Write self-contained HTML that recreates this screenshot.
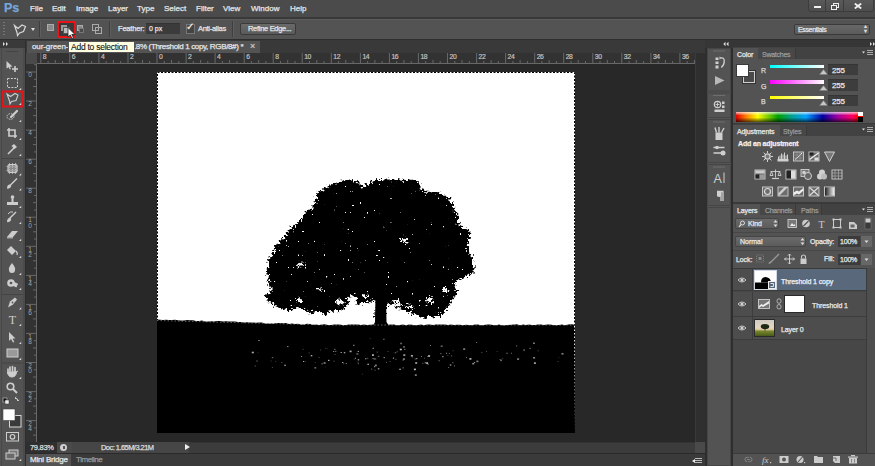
<!DOCTYPE html>
<html><head><meta charset="utf-8">
<style>
*{margin:0;padding:0;box-sizing:border-box}
html,body{width:875px;height:466px;overflow:hidden;background:#282828;font-family:"Liberation Sans",sans-serif;}
.a{position:absolute}
.t{position:absolute;white-space:nowrap;color:#e6e6e6;font-size:10px;line-height:12px;-webkit-text-stroke:0.25px currentColor}
</style></head><body>
<!-- menu bar -->
<div class="a" style="left:0;top:0;width:875px;height:17px;background:#4b4b4b"></div>
<div class="t" style="left:4px;top:2px;font-size:12.5px;line-height:12px;font-weight:bold;color:#74a6dc">Ps</div>
<div class="t" style="left:30px;top:5px;font-size:8px;line-height:8px">File</div>
<div class="t" style="left:52px;top:5px;font-size:8px;line-height:8px">Edit</div>
<div class="t" style="left:76px;top:5px;font-size:8px;line-height:8px">Image</div>
<div class="t" style="left:108px;top:5px;font-size:8px;line-height:8px">Layer</div>
<div class="t" style="left:137px;top:5px;font-size:8px;line-height:8px">Type</div>
<div class="t" style="left:164px;top:5px;font-size:8px;line-height:8px">Select</div>
<div class="t" style="left:196px;top:5px;font-size:8px;line-height:8px">Filter</div>
<div class="t" style="left:223px;top:5px;font-size:8px;line-height:8px">View</div>
<div class="t" style="left:251px;top:5px;font-size:8px;line-height:8px">Window</div>
<div class="t" style="left:290px;top:5px;font-size:8px;line-height:8px">Help</div>
<!-- window controls -->
<div class="a" style="left:808px;top:-2px;width:66px;height:14px;background:linear-gradient(#5a5a5a,#4e4e4e);border:1px solid #3c3c3c;border-radius:0 0 3px 3px"></div>
<div class="a" style="left:825px;top:0;width:1px;height:11px;background:#3c3c3c"></div>
<div class="a" style="left:843px;top:0;width:1px;height:11px;background:#3c3c3c"></div>
<div class="a" style="left:813.5px;top:6px;width:7px;height:2.2px;background:#f0f0f0"></div>
<div class="a" style="left:833px;top:3px;width:6px;height:5px;border:1.5px solid #f0f0f0"></div>
<div class="a" style="left:830.5px;top:5px;width:6px;height:4.5px;border:1.5px solid #f0f0f0;background:#555"></div>
<svg class="a" style="left:854px;top:3px" width="8" height="6"><path d="M0.8,0.5 L7.2,5.5 M7.2,0.5 L0.8,5.5" stroke="#f0f0f0" stroke-width="1.8"/></svg>

<!-- separator -->
<div class="a" style="left:0;top:17px;width:875px;height:2px;background:#393939"></div>
<!-- options bar -->
<div class="a" style="left:0;top:19px;width:875px;height:20px;background:#535353;border-top:1px solid #5c5c5c"></div>
<div class="a" style="left:0;top:39px;width:875px;height:1px;background:#2e2e2e"></div>
<div class="a" style="left:3px;top:22px;width:2px;height:15px;background:repeating-linear-gradient(#777 0 1px,transparent 1px 3px)"></div>
<svg class="a" style="left:13px;top:23px" width="14" height="14" viewBox="0 0 14 14"><path d="M1.5,2.5 L5,5.5 L9,2 L12.5,3.5 L10.5,8.5 L6.5,10 L4.5,12.5 L4,9.5 Z" fill="none" stroke="#d8d8d8" stroke-width="1.2"/></svg>
<div class="a" style="left:31px;top:28px;width:0;height:0;border-left:2.5px solid transparent;border-right:2.5px solid transparent;border-top:3px solid #ddd"></div>
<div class="a" style="left:39px;top:21px;width:1px;height:16px;background:#3e3e3e"></div>
<div class="a" style="left:40px;top:21px;width:1px;height:16px;background:#5e5e5e"></div>
<div class="a" style="left:47px;top:24px;width:7px;height:7px;border:1px solid #aaa;background:#8a8a8a"></div>
<div class="a" style="left:57px;top:21px;width:19px;height:17px;border:2px solid #e8141a;background:#3a3a3a"></div>
<div class="a" style="left:61px;top:25px;width:6px;height:6px;background:#9a9a9a"></div>
<div class="a" style="left:63px;top:27px;width:7px;height:7px;background:#bcbcbc;border:1px solid #555"></div>
<svg class="a" style="left:67px;top:27px" width="9" height="12" viewBox="0 0 9 12"><path d="M1,0.5 L1,10 L3.3,8 L5,11.5 L6.5,10.8 L4.8,7.5 L8,7.5 Z" fill="#fff" stroke="#222" stroke-width="0.8"/></svg>
<div class="a" style="left:77px;top:25px;width:6px;height:6px;border:1px solid #aaa;background:#8a8a8a"></div>
<div class="a" style="left:79px;top:27.5px;width:5px;height:5.5px;border:1px solid #777;background:#4a4a4a"></div>
<div class="a" style="left:92px;top:24px;width:7px;height:7px;border:1px solid #aaa"></div>
<div class="a" style="left:95px;top:27px;width:7px;height:7px;border:1px solid #aaa"></div>
<div class="a" style="left:109px;top:21px;width:1px;height:16px;background:#3e3e3e"></div>
<div class="a" style="left:110px;top:21px;width:1px;height:16px;background:#5e5e5e"></div>
<div class="t" style="left:118px;top:24px;font-size:7.5px;line-height:9px;letter-spacing:-0.2px">Feather:</div>
<div class="a" style="left:146px;top:23px;width:34px;height:11px;background:#3b3b3b;border-top:1px solid #333"></div>
<div class="t" style="left:149px;top:24px;font-size:7px;line-height:9px">0 px</div>
<div class="a" style="left:186px;top:24px;width:9px;height:10px;background:#444;border:1px solid #777"></div>
<div class="t" style="left:186px;top:21px;font-size:10px;line-height:12px;color:#eee">&#x2713;</div>
<div class="t" style="left:198px;top:24px;font-size:7.5px;line-height:9px;letter-spacing:-0.3px">Anti-alias</div>
<div class="a" style="left:232px;top:21px;width:1px;height:16px;background:#3e3e3e"></div>
<div class="a" style="left:233px;top:21px;width:1px;height:16px;background:#5e5e5e"></div>
<div class="a" style="left:240px;top:23px;width:56px;height:12px;background:linear-gradient(#6a6a6a,#5a5a5a);border:1px solid #3a3a3a;border-radius:2px"></div>
<div class="t" style="left:248px;top:24px;font-size:7.5px;line-height:9px;letter-spacing:-0.3px">Refine Edge...</div>
<div class="a" style="left:794px;top:24px;width:76px;height:11px;background:linear-gradient(#676767,#5b5b5b);border:1px solid #3a3a3a;border-radius:2px"></div>
<div class="t" style="left:798px;top:25px;font-size:7px;line-height:9px;letter-spacing:-0.35px">Essentials</div>
<div class="t" style="left:864px;top:24px;font-size:6px;line-height:5px;color:#ddd">&#x25B4;<br>&#x25BE;</div>

<!-- toolbar -->
<div class="a" style="left:0;top:40px;width:25px;height:426px;background:#535353"></div>
<div class="a" style="left:0;top:40px;width:25px;height:8px;background:#383838"></div>
<div class="a" style="left:25px;top:40px;width:1px;height:426px;background:#2e2e2e"></div>
<svg class="a" style="left:0;top:0" width="26" height="466"><rect x="1" y="48" width="1" height="418" fill="#484848"/><rect x="23.5" y="48" width="1" height="418" fill="#444"/><rect x="0" y="40" width="25" height="8" fill="#3a3a3a"/><path d="M3,42 l2,2 l-2,2z M6,42 l2,2 l-2,2z" fill="#ddd"/><rect x="6" y="51" width="12" height="1" fill="#444"/><path d="M6.5,61 L12.5,66.5 L10,66.8 L11,69 L9.8,69.4 L8.8,67.2 L6.5,68.5Z" fill="#cdcdcd"/><path d="M12,69h6M15,66v6" stroke="#cdcdcd" stroke-width="1.6"/><rect x="7.5" y="78.5" width="10" height="9" fill="none" stroke="#cdcdcd" stroke-width="1" stroke-dasharray="2 1.3"/><path d="M19,90 h2.2 v-2.2z" fill="#ddd"/><rect x="3" y="91.5" width="20" height="15" fill="none" stroke="#e4141b" stroke-width="2"/><path d="M7,94 L10.5,96.5 L15,93.5 L18,95 L16,100.5 L11.5,101.5 L10,104 L9.5,101Z" fill="none" stroke="#cdcdcd" stroke-width="1.1"/><path d="M19,105 h2.2 v-2.2z" fill="#ddd"/><ellipse cx="10.5" cy="116.5" rx="3.5" ry="2.8" fill="none" stroke="#cdcdcd" stroke-width="1" stroke-dasharray="1.5 1"/><path d="M11,117 L17,111" stroke="#cdcdcd" stroke-width="2.2" stroke-linecap="round"/><path d="M19,122 h2.2 v-2.2z" fill="#ddd"/><path d="M9,128 V136 H17 M7,130 H15 V138" fill="none" stroke="#cdcdcd" stroke-width="1.6"/><path d="M19,140 h2.2 v-2.2z" fill="#ddd"/><path d="M8,154 L15,147" stroke="#cdcdcd" stroke-width="1.6"/><path d="M14,144 l3,3 l-2.5,2 l-3,-3z" fill="#cdcdcd"/><path d="M19,156 h2.2 v-2.2z" fill="#ddd"/><rect x="2" y="158" width="21" height="1" fill="#444"/><rect x="8" y="164.5" width="9" height="8" rx="1.5" fill="#8a8a8a" stroke="#cdcdcd" stroke-width="1.2"/><path d="M9.5,163.0v11M12.5,163.0v11M15.5,163.0v11M6.5,166.5h12M6.5,170.5h12" stroke="#cdcdcd" stroke-width="0.7" stroke-dasharray="1 1"/><path d="M19,175.5 h2.2 v-2.2z" fill="#ddd"/><path d="M10,185.5 L17,178.5" stroke="#cdcdcd" stroke-width="1.5"/><path d="M7,188.5 q0,-4 3,-4 q2,1 0.5,3 q-1.5,1.5 -3.5,1z" fill="#cdcdcd"/><path d="M19,190.5 h2.2 v-2.2z" fill="#ddd"/><circle cx="12.5" cy="197" r="1.8" fill="#cdcdcd"/><rect x="11.5" y="198" width="2" height="4" fill="#cdcdcd"/><path d="M7,202 h11 v3 h-11z" fill="#cdcdcd"/><path d="M19,208 h2.2 v-2.2z" fill="#ddd"/><path d="M9,219 L16,212" stroke="#cdcdcd" stroke-width="1.5"/><path d="M7,222 q0,-4 3,-4 q2,1 0.5,3 q-1.5,1.5 -3.5,1z" fill="#cdcdcd"/><path d="M8,214 q2,-3 5,-2" stroke="#cdcdcd" fill="none" stroke-width="1"/><path d="M19,224 h2.2 v-2.2z" fill="#ddd"/><path d="M7,237 L12,231 L18,231 L13,237Z" fill="#cdcdcd"/><path d="M7,237 h6 v1.5 h-6z" fill="#aaa"/><path d="M19,241 h2.2 v-2.2z" fill="#ddd"/><path d="M7,250 L11,246 L16,251 L12,255Z" fill="#cdcdcd"/><path d="M16,251 q2,2 1,4" stroke="#cdcdcd" fill="none" stroke-width="1.2"/><path d="M19,258 h2.2 v-2.2z" fill="#ddd"/><path d="M12,263 Q16,268 15,270 A3,3 0 0 1 9,270 Q8,268 12,263Z" fill="#cdcdcd"/><path d="M19,275 h2.2 v-2.2z" fill="#ddd"/><circle cx="11" cy="283" r="3.8" fill="#cdcdcd"/><rect x="13" y="282" width="5" height="4" fill="#cdcdcd" transform="rotate(25 14 283)"/><circle cx="11" cy="283" r="1.3" fill="#555"/><path d="M19,290 h2.2 v-2.2z" fill="#ddd"/><rect x="2" y="294" width="21" height="1" fill="#444"/><path d="M8,307.5 L10,301.5 L15,297.5 L17,299.5 L13,304.5Z" fill="#cdcdcd"/><circle cx="12.5" cy="302.5" r="0.9" fill="#555"/><path d="M19,309.5 h2.2 v-2.2z" fill="#ddd"/><text x="12.5" y="323.5" text-anchor="middle" font-family="Liberation Serif" font-size="12" fill="#cdcdcd">T</text><path d="M19,326 h2.2 v-2.2z" fill="#ddd"/><path d="M9,332 L9,341 L11,339 L13,342.5 L14.3,342 L12.6,338.5 L15.5,338.5Z" fill="#cdcdcd"/><path d="M19,344 h2.2 v-2.2z" fill="#ddd"/><rect x="7" y="349" width="11" height="8" fill="#9a9a9a" stroke="#cdcdcd" stroke-width="1"/><path d="M19,360 h2.2 v-2.2z" fill="#ddd"/><rect x="2" y="362.5" width="21" height="1" fill="#444"/><path d="M8,373 L8,369 M10,372 L10,367 M12.5,372 L12.5,366.5 M15,372 L15,367.5" stroke="#cdcdcd" stroke-width="1.7" stroke-linecap="round"/><path d="M7.5,372 Q8,377 12,377 Q16,377 16.5,372 Q17,371 18,371" fill="#cdcdcd" stroke="#cdcdcd" stroke-width="1"/><path d="M19,379 h2.2 v-2.2z" fill="#ddd"/><circle cx="10.5" cy="386.5" r="3.3" fill="none" stroke="#cdcdcd" stroke-width="1.6"/><path d="M13,389 L17,393" stroke="#cdcdcd" stroke-width="2"/><rect x="3" y="398" width="4" height="4" fill="#111" stroke="#ccc" stroke-width="0.6"/><rect x="5" y="400" width="4" height="4" fill="#eee" stroke="#333" stroke-width="0.5"/><path d="M15,398 q3,0 3,3 M18,401 l-1.2,-1.2 M18,401 l1.2,-1.2 M15,398 l1.2,-1.2 M15,398 l1.2,1.2" stroke="#cdcdcd" stroke-width="0.9" fill="none"/><rect x="9.5" y="415.5" width="11.5" height="11.5" fill="#3a3a3a" stroke="#d8d8d8" stroke-width="1"/><rect x="3" y="409" width="12" height="11.5" fill="#ffffff" stroke="#444" stroke-width="0.6"/><rect x="6.5" y="432.5" width="12" height="8.5" fill="none" stroke="#cdcdcd" stroke-width="1"/><circle cx="12.5" cy="436.8" r="2.3" fill="none" stroke="#cdcdcd" stroke-width="1.2"/><rect x="9" y="450" width="9" height="6" fill="#777" stroke="#cdcdcd" stroke-width="1"/><rect x="6" y="453" width="9" height="6" fill="#6a6a6a" stroke="#cdcdcd" stroke-width="1"/><path d="M19,461 h2.2 v-2.2z" fill="#ddd"/></svg>

<!-- document area -->
<div class="a" style="left:26px;top:40px;width:679px;height:13px;background:#393939"></div>
<div class="a" style="left:27px;top:41px;width:233px;height:12px;background:#535353"></div>
<div class="t" style="left:32px;top:43px;font-size:8px;line-height:8px;letter-spacing:-0.1px">our-green-</div>
<div class="t" style="left:134px;top:43px;font-size:8px;line-height:8px;letter-spacing:-0.35px">.8% (Threshold 1 copy, RGB/8#) *</div>
<div class="t" style="left:250px;top:42px;font-size:9px;line-height:9px;color:#ccc">&#xd7;</div>
<svg class="a" style="left:0;top:0" width="875" height="466"><rect x="37" y="53" width="658" height="11" fill="#323232"/><rect x="37" y="63" width="658" height="1" fill="#686868"/><path d="M40.8,53V64M48.1,61V64M55.3,60V64M62.6,61V64M69.8,53V64M77.1,61V64M84.4,60V64M91.6,61V64M98.9,53V64M106.2,61V64M113.4,60V64M120.7,61V64M128.0,53V64M135.2,61V64M142.5,60V64M149.7,61V64M157.0,53V64M164.3,61V64M171.5,60V64M178.8,61V64M186.1,53V64M193.3,61V64M200.6,60V64M207.8,61V64M215.1,53V64M222.4,61V64M229.6,60V64M236.9,61V64M244.2,53V64M251.4,61V64M258.7,60V64M265.9,61V64M273.2,53V64M280.5,61V64M287.7,60V64M295.0,61V64M302.2,53V64M309.5,61V64M316.8,60V64M324.0,61V64M331.3,53V64M338.6,61V64M345.8,60V64M353.1,61V64M360.4,53V64M367.6,61V64M374.9,60V64M382.1,61V64M389.4,53V64M396.7,61V64M403.9,60V64M411.2,61V64M418.4,53V64M425.7,61V64M433.0,60V64M440.2,61V64M447.5,53V64M454.8,61V64M462.0,60V64M469.3,61V64M476.6,53V64M483.8,61V64M491.1,60V64M498.3,61V64M505.6,53V64M512.9,61V64M520.1,60V64M527.4,61V64M534.7,53V64M541.9,61V64M549.2,60V64M556.4,61V64M563.7,53V64M571.0,61V64M578.2,60V64M585.5,61V64M592.8,53V64M600.0,61V64M607.3,60V64M614.5,61V64M621.8,53V64M629.1,61V64M636.3,60V64M643.6,61V64M650.9,53V64M658.1,61V64M665.4,60V64M672.6,61V64M679.9,53V64M687.2,61V64M694.4,60V64" stroke="#686868" stroke-width="1" fill="none"/><g fill="#c0c0c0" font-family="Liberation Sans" font-size="6.8" letter-spacing="-0.4" stroke="#c0c0c0" stroke-width="0.2"><text x="42.8" y="58.6">8</text><text x="71.8" y="58.6">6</text><text x="100.9" y="58.6">4</text><text x="129.9" y="58.6">2</text><text x="159.0" y="58.6">0</text><text x="188.1" y="58.6">2</text><text x="217.1" y="58.6">4</text><text x="246.2" y="58.6">6</text><text x="275.2" y="58.6">8</text><text x="304.2" y="58.6">10</text><text x="333.3" y="58.6">12</text><text x="362.4" y="58.6">14</text><text x="391.4" y="58.6">16</text><text x="420.4" y="58.6">18</text><text x="449.5" y="58.6">20</text><text x="478.6" y="58.6">22</text><text x="507.6" y="58.6">24</text><text x="536.7" y="58.6">26</text><text x="565.7" y="58.6">28</text><text x="594.8" y="58.6">30</text><text x="623.8" y="58.6">32</text><text x="652.9" y="58.6">34</text><text x="681.9" y="58.6">36</text></g><rect x="26" y="64" width="11" height="378" fill="#323232"/><rect x="36" y="64" width="1" height="378" fill="#686868"/><rect x="26" y="53" width="11" height="11" fill="#4a4a4a"/><path d="M34,64.7H37M26,72.0H37M34,79.3H37M33,86.5H37M34,93.8H37M26,101.0H37M34,108.3H37M33,115.6H37M34,122.8H37M26,130.1H37M34,137.4H37M33,144.6H37M34,151.9H37M26,159.2H37M34,166.4H37M33,173.7H37M34,180.9H37M26,188.2H37M34,195.5H37M33,202.7H37M34,210.0H37M26,217.2H37M34,224.5H37M33,231.8H37M34,239.0H37M26,246.3H37M34,253.6H37M33,260.8H37M34,268.1H37M26,275.4H37M34,282.6H37M33,289.9H37M34,297.1H37M26,304.4H37M34,311.7H37M33,318.9H37M34,326.2H37M26,333.4H37M34,340.7H37M33,348.0H37M34,355.2H37M26,362.5H37M34,369.8H37M33,377.0H37M34,384.3H37M26,391.6H37M34,398.8H37M33,406.1H37M34,413.3H37M26,420.6H37M34,427.9H37M33,435.1H37" stroke="#686868" stroke-width="1" fill="none"/><g fill="#c0c0c0" font-family="Liberation Sans" font-size="6.5" fill-opacity="0.8"><text x="28.2" y="77.2">0</text><text x="28.2" y="106.2">2</text><text x="28.2" y="135.3">4</text><text x="28.2" y="164.3">6</text><text x="28.2" y="193.4">8</text><text x="28.2" y="222.4">1</text><text x="28.2" y="227.6">0</text><text x="28.2" y="251.5">1</text><text x="28.2" y="256.7">2</text><text x="28.2" y="280.6">1</text><text x="28.2" y="285.8">4</text><text x="28.2" y="309.6">1</text><text x="28.2" y="314.8">6</text><text x="28.2" y="338.6">1</text><text x="28.2" y="343.8">8</text><text x="28.2" y="367.7">2</text><text x="28.2" y="372.9">0</text><text x="28.2" y="396.8">2</text><text x="28.2" y="401.9">2</text><text x="28.2" y="425.8">2</text><text x="28.2" y="431.0">4</text></g></svg>
<!-- pasteboard -->
<div class="a" style="left:37px;top:64px;width:658px;height:378px;background:#282828"></div>
<!-- vscroll -->
<div class="a" style="left:695px;top:53px;width:10px;height:389px;background:#2f2f2f;border-left:1px solid #3a3a3a"></div>
<!-- status bar -->
<div class="a" style="left:26px;top:442px;width:679px;height:11px;background:#3a3a3a"></div>
<div class="a" style="left:26px;top:442px;width:31px;height:11px;background:#2f2f2f"></div>
<div class="t" style="left:30px;top:444px;font-size:7.5px;line-height:8px;letter-spacing:-0.3px;color:#ddd">79.83%</div>
<div class="a" style="left:57px;top:442px;width:15px;height:11px;background:#4a4a4a"></div>
<div class="a" style="left:60px;top:444px;width:7px;height:7px;border-radius:50%;background:#cfcfcf"></div>
<div class="a" style="left:63px;top:446px;width:2px;height:3px;background:#555"></div>
<div class="a" style="left:72px;top:442px;width:117px;height:11px;background:#464646"></div>
<div class="t" style="left:101px;top:444px;font-size:7.5px;line-height:8px;letter-spacing:-0.55px;color:#ddd">Doc: 1.65M/3.21M</div>
<div class="a" style="left:185px;top:444px;width:0;height:0;border-top:3.5px solid transparent;border-bottom:3.5px solid transparent;border-left:5px solid #eee"></div>
<div class="a" style="left:190px;top:442px;width:505px;height:11px;background:#3c3c3c;border-top:1px solid #333"></div>
<div class="a" style="left:695px;top:442px;width:10px;height:11px;background:#4a4a4a"></div>
<!-- mini bridge -->
<div class="a" style="left:26px;top:453px;width:679px;height:13px;background:#3a3a3a;border-top:1px solid #2a2a2a"></div>
<div class="a" style="left:26px;top:454px;width:45px;height:12px;background:#535353"></div>
<div class="t" style="left:30px;top:456px;font-size:8px;line-height:8px;letter-spacing:-0.2px;color:#e8e8e8">Mini Bridge</div>
<div class="t" style="left:76px;top:456px;font-size:8px;line-height:8px;letter-spacing:-0.45px;color:#999">Timeline</div>
<div class="a" style="left:695px;top:458px;width:7px;height:1px;background:#bbb;box-shadow:0 2px 0 #bbb,0 4px 0 #bbb"></div>
<div class="a" style="left:692px;top:459px;width:0;height:0;border-top:2px solid transparent;border-bottom:2px solid transparent;border-right:3px solid #eee"></div>

<!-- canvas -->
<div class="a" style="left:157px;top:72px;width:418px;height:361px;background:#fff"></div>
<svg class="a" style="left:0;top:0" width="875" height="466" viewBox="0 0 875 466">
<defs>
<filter id="leafy" x="-10%" y="-10%" width="120%" height="120%">
<feTurbulence type="fractalNoise" baseFrequency="0.09" numOctaves="1" seed="5" result="n0"/>
<feDisplacementMap in="SourceGraphic" in2="n0" scale="9" xChannelSelector="R" yChannelSelector="G" result="d0"/>
<feTurbulence type="fractalNoise" baseFrequency="0.4" numOctaves="2" seed="3" result="n"/>
<feDisplacementMap in="d0" in2="n" scale="9" xChannelSelector="R" yChannelSelector="G" result="d"/>
<feTurbulence type="fractalNoise" baseFrequency="0.42" numOctaves="1" seed="9" result="h"/>
<feColorMatrix in="h" type="matrix" values="0 0 0 0 0  0 0 0 0 0  0 0 0 0 0  0 0 0 -30 22.9" result="hm"/>
<feComposite in="d" in2="hm" operator="in"/>
</filter>
</defs>
<path d="M157,433 L157.0,319.5 L160.0,319.7 L163.0,320.1 L166.0,319.7 L169.0,319.9 L172.0,320.1 L175.0,319.7 L178.0,320.2 L181.0,320.4 L184.0,320.6 L187.0,320.0 L190.0,320.3 L193.0,320.2 L196.0,321.0 L199.0,321.0 L202.0,320.4 L205.0,321.5 L208.0,321.6 L211.0,321.3 L214.0,321.4 L217.0,321.0 L220.0,321.0 L223.0,321.6 L226.0,321.2 L229.0,321.4 L232.0,321.6 L235.0,321.5 L238.0,322.0 L241.0,322.1 L244.0,322.6 L247.0,322.3 L250.0,322.5 L253.0,322.5 L256.0,322.7 L259.0,322.6 L262.0,322.6 L265.0,323.4 L268.0,323.5 L271.0,323.4 L274.0,323.4 L277.0,323.1 L280.0,323.1 L283.0,323.2 L286.0,323.1 L289.0,323.9 L292.0,323.6 L295.0,324.1 L298.0,323.8 L301.0,324.4 L304.0,324.4 L307.0,323.7 L310.0,324.0 L313.0,324.8 L316.0,324.4 L319.0,325.0 L322.0,324.5 L325.0,324.3 L328.0,324.9 L331.0,325.1 L334.0,324.6 L337.0,324.4 L340.0,324.6 L343.0,325.3 L346.0,325.1 L349.0,324.4 L352.0,324.5 L355.0,324.4 L358.0,324.4 L361.0,325.1 L364.0,324.5 L367.0,324.9 L370.0,324.7 L373.0,324.5 L376.0,325.0 L379.0,324.4 L382.0,324.9 L385.0,324.4 L388.0,324.7 L391.0,324.5 L394.0,324.6 L397.0,325.3 L400.0,325.1 L403.0,324.6 L406.0,325.2 L409.0,324.5 L412.0,324.7 L415.0,325.2 L418.0,324.9 L421.0,324.4 L424.0,325.3 L427.0,324.5 L430.0,324.6 L433.0,325.1 L436.0,324.6 L439.0,324.6 L442.0,324.4 L445.0,324.4 L448.0,324.9 L451.0,324.5 L454.0,324.9 L457.0,324.7 L460.0,324.8 L463.0,325.3 L466.0,324.8 L469.0,324.9 L472.0,325.2 L475.0,324.5 L478.0,324.5 L481.0,325.2 L484.0,325.1 L487.0,324.5 L490.0,324.5 L493.0,325.0 L496.0,325.2 L499.0,324.5 L502.0,325.3 L505.0,325.2 L508.0,324.9 L511.0,324.7 L514.0,324.4 L517.0,324.3 L520.0,325.3 L523.0,324.5 L526.0,325.0 L529.0,324.6 L532.0,325.1 L535.0,324.9 L538.0,324.6 L541.0,324.5 L544.0,325.0 L547.0,324.4 L550.0,324.5 L553.0,324.9 L556.0,325.2 L559.0,324.9 L562.0,324.6 L565.0,325.2 L568.0,324.5 L571.0,324.3 L574.0,324.6 L575,433Z" fill="#000"/>
<g filter="url(#leafy)"><path d="M266.0,271.0 L268.7,265.8 L267.0,257.2 L275.6,253.7 L273.9,248.6 L280.8,240.0 L282.0,238.7 L290.0,230.0 L297.8,223.0 L301.0,218.0 L311.5,207.8 L311.5,201.8 L317.5,194.0 L328.7,183.7 L339.0,181.0 L350.6,179.6 L361.0,186.5 L369.5,184.7 L379.8,178.7 L395.0,181.3 L400.0,179.6 L417.0,181.3 L422.3,190.7 L430.9,190.7 L441.2,192.5 L448.0,199.3 L451.5,208.0 L458.4,214.8 L458.4,223.4 L470.4,230.2 L468.7,245.0 L471.5,255.5 L473.4,271.0 L463.8,278.6 L456.0,284.4 L454.0,298.0 L450.0,305.7 L440.6,314.4 L431.0,318.3 L421.0,317.3 L409.7,313.4 L400.0,309.6 L392.0,305.0 L386.0,302.0 L386.0,318.0 L375.5,318.0 L375.5,301.0 L366.0,304.0 L360.0,305.0 L352.0,297.0 L345.0,309.8 L335.0,308.7 L327.0,315.5 L320.2,312.0 L311.7,315.5 L306.5,308.7 L297.9,307.0 L291.0,312.1 L280.8,308.7 L272.2,305.2 L265.3,296.7 L273.9,291.5 L267.0,286.4 L268.7,279.5Z" fill="#000"/></g>
<path d="M375.5,296 L386,296 L386.5,322 L389,326 L373,326 L375,322Z" fill="#000"/>
<g fill="#fff" filter="url(#leafy)"><ellipse cx="352" cy="300" rx="5" ry="3"/><ellipse cx="340" cy="302" rx="4" ry="2.5"/><ellipse cx="398" cy="304" rx="5" ry="3"/><ellipse cx="410" cy="306" rx="4" ry="2.5"/><ellipse cx="365" cy="296" rx="3" ry="2"/><ellipse cx="300" cy="300" rx="3" ry="2"/><ellipse cx="430" cy="300" rx="3" ry="2"/><ellipse cx="320" cy="290" rx="2.5" ry="1.8"/><ellipse cx="445" cy="290" rx="2.5" ry="1.8"/><ellipse cx="405" cy="240" rx="3" ry="2.2"/><ellipse cx="300" cy="265" rx="2" ry="1.5"/></g>
<rect x="157.5" y="72.5" width="417" height="360" fill="none" stroke="#000" stroke-width="1" stroke-dasharray="2 1.5"/>
<path d="M157,320.5 L327,325 L575,325" fill="none" stroke="#fff" stroke-width="0.8" stroke-dasharray="1.5 2" opacity="0.5"/>
<g fill="#e0e0e0" opacity="0.85"><rect x="414.7" y="358.6" width="1" height="0.8" opacity="0.7"/><rect x="422.3" y="362.9" width="1" height="0.8" opacity="0.7"/><rect x="440.4" y="353.3" width="1" height="0.8" opacity="0.9"/><rect x="251.8" y="351.7" width="2" height="1.6" opacity="0.9"/><rect x="328.0" y="359.8" width="1.5" height="1.2" opacity="0.9"/><rect x="533.1" y="357.0" width="2" height="1.6" opacity="0.7"/><rect x="537.8" y="350.6" width="0.7" height="0.6" opacity="1"/><rect x="254.7" y="365.5" width="1.2" height="1.0" opacity="0.5"/><rect x="321.4" y="363.2" width="1.5" height="1.2" opacity="0.5"/><rect x="258.4" y="340.0" width="1.2" height="1.0" opacity="0.9"/><rect x="372.6" y="347.8" width="1.2" height="1.0" opacity="1"/><rect x="271.8" y="357.0" width="1.5" height="1.2" opacity="0.5"/><rect x="365.2" y="358.3" width="1.2" height="1.0" opacity="1"/><rect x="472.2" y="362.9" width="2" height="1.6" opacity="0.7"/><rect x="383.6" y="357.2" width="1.2" height="1.0" opacity="1"/><rect x="349.6" y="350.6" width="2" height="1.6" opacity="0.9"/><rect x="281.4" y="362.3" width="0.9" height="0.7" opacity="0.7"/><rect x="334.6" y="354.0" width="0.9" height="0.7" opacity="0.7"/><rect x="440.7" y="345.4" width="2" height="1.6" opacity="0.5"/><rect x="333.6" y="360.7" width="1" height="0.8" opacity="0.7"/><rect x="367.4" y="363.7" width="1.5" height="1.2" opacity="1"/><rect x="474.2" y="362.4" width="1" height="0.8" opacity="0.5"/><rect x="334.0" y="348.8" width="1.5" height="1.2" opacity="0.5"/><rect x="334.9" y="350.8" width="1.5" height="1.2" opacity="0.5"/><rect x="448.9" y="353.2" width="1" height="0.8" opacity="0.7"/><rect x="500.0" y="359.5" width="2" height="1.6" opacity="0.5"/><rect x="320.1" y="349.6" width="1" height="0.8" opacity="0.5"/><rect x="308.8" y="352.7" width="0.7" height="0.6" opacity="1"/><rect x="385.9" y="361.9" width="1" height="0.8" opacity="0.7"/><rect x="389.7" y="361.0" width="0.7" height="0.6" opacity="1"/><rect x="476.2" y="342.3" width="0.9" height="0.7" opacity="1"/><rect x="287.2" y="346.1" width="1.2" height="1.0" opacity="0.9"/><rect x="356.4" y="353.1" width="2" height="1.6" opacity="0.5"/><rect x="516.2" y="345.5" width="1" height="0.8" opacity="0.9"/><rect x="377.9" y="355.8" width="1.5" height="1.2" opacity="0.5"/><rect x="345.7" y="363.1" width="1" height="0.8" opacity="1"/><rect x="314.9" y="362.0" width="0.7" height="0.6" opacity="0.7"/><rect x="333.0" y="351.0" width="1.2" height="1.0" opacity="0.7"/><rect x="533.2" y="342.6" width="1.5" height="1.2" opacity="1"/><rect x="402.6" y="359.8" width="0.9" height="0.7" opacity="1"/><rect x="372.0" y="354.2" width="2" height="1.6" opacity="0.7"/><rect x="473.9" y="362.0" width="1" height="0.8" opacity="1"/><rect x="523.4" y="349.5" width="1.5" height="1.2" opacity="0.7"/><rect x="427.6" y="363.8" width="1" height="0.8" opacity="1"/><rect x="310.8" y="355.1" width="1.5" height="1.2" opacity="1"/><rect x="451.0" y="355.4" width="1.2" height="1.0" opacity="0.5"/><rect x="372.0" y="354.6" width="1.5" height="1.2" opacity="1"/><rect x="511.0" y="352.8" width="1" height="0.8" opacity="0.7"/><rect x="424.7" y="362.3" width="1.2" height="1.0" opacity="0.9"/><rect x="367.2" y="357.8" width="1" height="0.8" opacity="0.7"/><rect x="557.7" y="361.0" width="0.7" height="0.6" opacity="0.9"/><rect x="387.7" y="351.0" width="0.7" height="0.6" opacity="1"/><rect x="284.3" y="364.7" width="1.5" height="1.2" opacity="0.9"/><rect x="469.4" y="358.1" width="2" height="1.6" opacity="1"/><rect x="442.1" y="356.0" width="1.5" height="1.2" opacity="0.7"/><rect x="415.9" y="358.0" width="1.5" height="1.2" opacity="0.7"/><rect x="421.1" y="356.3" width="0.9" height="0.7" opacity="0.9"/><rect x="270.7" y="360.6" width="0.9" height="0.7" opacity="0.5"/><rect x="355.0" y="357.8" width="1" height="0.8" opacity="1"/><rect x="476.4" y="360.6" width="2" height="1.6" opacity="0.7"/><rect x="325.4" y="348.3" width="0.7" height="0.6" opacity="0.7"/><rect x="302.6" y="348.9" width="1" height="0.8" opacity="0.5"/><rect x="448.1" y="367.1" width="1" height="0.8" opacity="0.7"/><rect x="399.3" y="368.7" width="1.5" height="1.2" opacity="1"/><rect x="395.5" y="358.9" width="0.9" height="0.7" opacity="0.9"/><rect x="275.5" y="361.3" width="0.7" height="0.6" opacity="0.7"/><rect x="392.9" y="357.6" width="1.2" height="1.0" opacity="1"/><rect x="326.8" y="348.4" width="0.7" height="0.6" opacity="0.5"/><rect x="303.0" y="361.0" width="1.2" height="1.0" opacity="0.9"/><rect x="374.7" y="358.4" width="1.5" height="1.2" opacity="0.5"/><rect x="413.9" y="368.6" width="2" height="1.6" opacity="1"/><rect x="438.6" y="360.4" width="1" height="0.8" opacity="0.9"/><rect x="454.1" y="365.6" width="0.9" height="0.7" opacity="1"/><rect x="446.0" y="352.8" width="1" height="0.8" opacity="1"/><rect x="374.8" y="364.6" width="2" height="1.6" opacity="0.7"/><rect x="343.2" y="363.6" width="0.7" height="0.6" opacity="0.9"/><rect x="533.9" y="362.3" width="2" height="1.6" opacity="0.9"/><rect x="394.7" y="352.1" width="1.5" height="1.2" opacity="0.5"/><rect x="314.3" y="367.0" width="2" height="1.6" opacity="0.5"/><rect x="558.6" y="357.0" width="0.7" height="0.6" opacity="0.5"/><rect x="376.7" y="351.6" width="1.2" height="1.0" opacity="0.5"/><rect x="452.4" y="362.4" width="1" height="0.8" opacity="0.9"/><rect x="383.1" y="338.7" width="1.5" height="1.2" opacity="0.5"/><rect x="372.3" y="358.0" width="1.5" height="1.2" opacity="0.5"/><rect x="357.8" y="363.4" width="0.9" height="0.7" opacity="1"/><rect x="357.7" y="350.9" width="1.2" height="1.0" opacity="1"/><rect x="343.8" y="352.1" width="1.5" height="1.2" opacity="0.9"/><rect x="410.9" y="355.0" width="2" height="1.6" opacity="0.9"/><rect x="517.1" y="358.3" width="2" height="1.6" opacity="0.7"/><rect x="301.1" y="356.1" width="1" height="0.8" opacity="1"/><rect x="361.9" y="373.8" width="0.7" height="0.6" opacity="0.7"/><rect x="369.8" y="338.4" width="0.9" height="0.7" opacity="0.5"/><rect x="402.6" y="367.4" width="1.2" height="1.0" opacity="0.7"/><rect x="506.3" y="352.7" width="1.5" height="1.2" opacity="0.5"/><rect x="353.9" y="358.7" width="0.7" height="0.6" opacity="0.9"/><rect x="426.1" y="362.3" width="2" height="1.6" opacity="1"/><rect x="374.0" y="366.2" width="1.2" height="1.0" opacity="0.9"/><rect x="414.8" y="374.3" width="2" height="1.6" opacity="0.7"/><rect x="377.8" y="368.2" width="1.5" height="1.2" opacity="0.9"/><rect x="463.2" y="348.3" width="2" height="1.6" opacity="0.7"/><rect x="318.6" y="357.1" width="0.9" height="0.7" opacity="0.7"/><rect x="257.6" y="352.5" width="0.7" height="0.6" opacity="0.5"/><rect x="305.2" y="361.4" width="0.7" height="0.6" opacity="0.7"/><rect x="402.9" y="358.3" width="2" height="1.6" opacity="0.7"/><rect x="340.6" y="352.0" width="1.2" height="1.0" opacity="0.9"/><rect x="324.9" y="366.6" width="0.7" height="0.6" opacity="0.5"/><rect x="430.1" y="345.0" width="0.9" height="0.7" opacity="1"/><rect x="374.5" y="369.7" width="1" height="0.8" opacity="0.7"/><rect x="561.5" y="353.0" width="2" height="1.6" opacity="0.7"/><rect x="447.3" y="354.8" width="1" height="0.8" opacity="0.5"/><rect x="399.8" y="348.7" width="2" height="1.6" opacity="1"/><rect x="412.2" y="357.4" width="0.9" height="0.7" opacity="0.5"/><rect x="403.3" y="354.3" width="2" height="1.6" opacity="0.9"/><rect x="415.2" y="362.2" width="2" height="1.6" opacity="0.9"/><rect x="449.8" y="364.4" width="1.5" height="1.2" opacity="0.9"/><rect x="396.7" y="351.4" width="1" height="0.8" opacity="0.7"/><rect x="496.7" y="351.1" width="0.9" height="0.7" opacity="0.5"/><rect x="342.1" y="362.0" width="1.2" height="1.0" opacity="1"/><rect x="481.4" y="352.3" width="0.9" height="0.7" opacity="0.7"/><rect x="424.0" y="357.8" width="1" height="0.8" opacity="0.5"/><rect x="256.4" y="360.8" width="1" height="0.8" opacity="0.5"/><rect x="502.4" y="358.5" width="0.7" height="0.6" opacity="0.9"/><rect x="271.9" y="367.0" width="1" height="0.8" opacity="0.5"/><rect x="428.1" y="355.2" width="2" height="1.6" opacity="1"/><rect x="357.7" y="359.2" width="1.5" height="1.2" opacity="0.9"/><rect x="371.2" y="368.7" width="1" height="0.8" opacity="0.9"/><rect x="403.0" y="346.1" width="2" height="1.6" opacity="0.5"/><rect x="357.7" y="361.8" width="0.7" height="0.6" opacity="1"/><rect x="529.4" y="347.8" width="1.5" height="1.2" opacity="0.5"/><rect x="353.2" y="344.8" width="1.2" height="1.0" opacity="1"/><rect x="323.6" y="362.2" width="2" height="1.6" opacity="0.7"/><rect x="452.6" y="350.4" width="1" height="0.8" opacity="0.5"/><rect x="427.2" y="356.3" width="0.9" height="0.7" opacity="0.7"/><rect x="486.0" y="351.1" width="0.7" height="0.6" opacity="1"/><rect x="256.6" y="360.5" width="0.9" height="0.7" opacity="0.7"/><rect x="404.2" y="348.8" width="1.2" height="1.0" opacity="0.7"/><rect x="373.8" y="358.5" width="1" height="0.8" opacity="1"/><rect x="400.1" y="342.7" width="2" height="1.6" opacity="0.5"/><rect x="466.0" y="357.4" width="0.9" height="0.7" opacity="1"/><rect x="499.3" y="359.2" width="1" height="0.8" opacity="0.5"/></g>
</svg>

<!-- dock -->
<div class="a" style="left:705px;top:40px;width:170px;height:8px;background:#363636"></div>
<svg class="a" style="left:705px;top:40px" width="170" height="8"><path d="M20.5,1.8 l-2.2,2.2 l2.2,2.2z M23.5,1.8 l-2.2,2.2 l2.2,2.2z M165,2 l2,2 l-2,2z M168,2 l2,2 l-2,2z" fill="#ddd"/></svg>
<div class="a" style="left:705px;top:48px;width:2px;height:418px;background:#2e2e2e"></div>
<div class="a" style="left:707px;top:48px;width:24px;height:418px;background:#535353"></div>
<div class="a" style="left:731px;top:48px;width:2px;height:418px;background:#2e2e2e"></div>
<svg class="a" style="left:707px;top:0" width="24" height="466"><rect x="0.5" y="48.5" width="23" height="42.5" fill="#535353" stroke="#464646" stroke-width="1"/><rect x="6" y="50.5" width="12" height="1" fill="#6e6e6e"/><rect x="0.5" y="93.0" width="23" height="24.5" fill="#535353" stroke="#464646" stroke-width="1"/><rect x="6" y="95.0" width="12" height="1" fill="#6e6e6e"/><rect x="0.5" y="119.5" width="23" height="43" fill="#535353" stroke="#464646" stroke-width="1"/><rect x="6" y="121.5" width="12" height="1" fill="#6e6e6e"/><rect x="0.5" y="164.5" width="23" height="41" fill="#535353" stroke="#464646" stroke-width="1"/><rect x="6" y="166.5" width="12" height="1" fill="#6e6e6e"/><rect x="0.5" y="207.5" width="23" height="258" fill="#535353" stroke="#464646" stroke-width="1"/><rect x="8.5" y="57.5" width="3" height="2.5" fill="#cfcfcf"/><rect x="8.5" y="61.5" width="3" height="2.5" fill="#cfcfcf"/><rect x="8.5" y="65.5" width="3" height="3" fill="#cfcfcf"/><path d="M13.5,58 q3.5,-1 3.8,3 q0,4 -3,6.5" stroke="#cfcfcf" fill="none" stroke-width="1.3"/><path d="M12.5,56.5 l2,1.5 l-2,1.5z" fill="#cfcfcf"/><path d="M8,76 L17.5,80.5 L8,85Z" fill="#b8b8b8"/><circle cx="10.5" cy="104.5" r="3.2" fill="none" stroke="#cfcfcf" stroke-width="1.2"/><path d="M8.5,104.5h4M10.5,102.5v4" stroke="#cfcfcf" stroke-width="0.9"/><rect x="15" y="101.5" width="2.5" height="2.5" fill="#cfcfcf"/><rect x="15" y="105.5" width="2.5" height="2.5" fill="#cfcfcf"/><rect x="7.5" y="109.5" width="10" height="2.5" fill="#cfcfcf"/><rect x="8.5" y="132.5" width="7" height="7.5" fill="#cfcfcf"/><path d="M9.5,132.5 L8,127.5 M12,132.5 L12,127 M14.5,132.5 L17,128" stroke="#cfcfcf" stroke-width="1.4"/><path d="M6.5,147.5 h11 M6.5,153 h9" stroke="#cfcfcf" stroke-width="1.3"/><circle cx="10" cy="147.5" r="1.8" fill="#cfcfcf"/><circle cx="16" cy="153" r="2.5" fill="#cfcfcf"/><text x="6.5" y="182.8" font-family="Liberation Sans" font-size="12.5" fill="#cfcfcf">A</text><rect x="16.5" y="172.5" width="1" height="10.5" fill="#cfcfcf"/><path d="M10,191.5 h6.5 M14,191.5 v9.5 M16,191.5 v9.5" stroke="#cfcfcf" stroke-width="1.3" fill="none"/><path d="M13,191.5 a2.6,2.6 0 0 0 0,5.4z" fill="#cfcfcf"/><rect x="10" y="191" width="4" height="5.5" fill="#cfcfcf"/></svg>

<!-- panels -->
<div class="a" style="left:733px;top:48px;width:142px;height:418px;background:#3a3a3a"></div>
<div class="a" style="left:733px;top:47px;width:142px;height:12px;background:#424242"></div>
<div class="a" style="left:733px;top:48px;width:25px;height:11px;background:#535353"></div>
<div class="a" style="left:758px;top:48px;width:38px;height:11px;background:#474747;border-right:1px solid #3a3a3a"></div>
<div class="t" style="left:737px;top:51px;font-size:7px;line-height:7px;color:#eaeaea;letter-spacing:-0.1px">Color</div>
<div class="t" style="left:762px;top:51px;font-size:7px;line-height:7px;color:#9a9a9a;letter-spacing:-0.25px">Swatches</div>
<div class="a" style="left:733px;top:59px;width:142px;height:64px;background:#535353"></div>
<svg class="a" style="left:862px;top:50px" width="12" height="6"><path d="M0,1.5 h3 l-1.5,2z" fill="#ddd"/><path d="M5,0.5h6M5,2.5h6M5,4.5h6" stroke="#aaa" stroke-width="1"/></svg>
<div class="a" style="left:743px;top:71px;width:12px;height:12px;background:#4a4a4a;border:1px solid #cfcfcf;box-shadow:0 0 0 1px #333"></div>
<div class="a" style="left:736px;top:64px;width:13px;height:13px;background:#fff;border:1px solid #3a3a3a"></div>
<div class="t" style="left:761px;top:67.0px;font-size:7px;line-height:7px;color:#d8d8d8;">R</div>
<div class="a" style="left:770px;top:64.5px;width:54px;height:3.5px;background:linear-gradient(90deg,#00ffff,#fff)"></div>
<svg class="a" style="left:819px;top:69.0px" width="9" height="6"><path d="M4.5,0.5 L8.5,5.5 H0.5Z" fill="#c8c8c8" stroke="#777" stroke-width="0.6"/></svg>
<div class="a" style="left:828px;top:63.5px;width:30px;height:11.5px;background:#3d3d3d;border-top:1px solid #353535"></div>
<div class="t" style="left:832px;top:66.5px;font-size:8px;line-height:8px;color:#e8e8e8;letter-spacing:-0.2px">255</div>
<div class="t" style="left:761px;top:82.5px;font-size:7px;line-height:7px;color:#d8d8d8;">G</div>
<div class="a" style="left:770px;top:80.0px;width:54px;height:3.5px;background:linear-gradient(90deg,#ff00ff,#fff)"></div>
<svg class="a" style="left:819px;top:84.5px" width="9" height="6"><path d="M4.5,0.5 L8.5,5.5 H0.5Z" fill="#c8c8c8" stroke="#777" stroke-width="0.6"/></svg>
<div class="a" style="left:828px;top:79.0px;width:30px;height:11.5px;background:#3d3d3d;border-top:1px solid #353535"></div>
<div class="t" style="left:832px;top:82.0px;font-size:8px;line-height:8px;color:#e8e8e8;letter-spacing:-0.2px">255</div>
<div class="t" style="left:761px;top:98.0px;font-size:7px;line-height:7px;color:#d8d8d8;">B</div>
<div class="a" style="left:770px;top:95.5px;width:54px;height:3.5px;background:linear-gradient(90deg,#ffff00,#fff)"></div>
<svg class="a" style="left:819px;top:100.0px" width="9" height="6"><path d="M4.5,0.5 L8.5,5.5 H0.5Z" fill="#c8c8c8" stroke="#777" stroke-width="0.6"/></svg>
<div class="a" style="left:828px;top:94.5px;width:30px;height:11.5px;background:#3d3d3d;border-top:1px solid #353535"></div>
<div class="t" style="left:832px;top:97.5px;font-size:8px;line-height:8px;color:#e8e8e8;letter-spacing:-0.2px">255</div>
<div class="a" style="left:736px;top:112px;width:127px;height:10px;background:linear-gradient(90deg,#e00000 0%,#ff8000 8%,#ffff00 17%,#00a000 33%,#00a0a0 45%,#00a0ff 55%,#0000a0 68%,#a000a0 80%,#ff0060 92%,#ff0000 96%);"></div>
<div class="a" style="left:736px;top:112px;width:127px;height:10px;background:linear-gradient(#ffffffc0 0%,#ffffff00 35%,#00000000 55%,#000000b0 100%)"></div>
<div class="a" style="left:858px;top:112px;width:5px;height:4px;background:#fff"></div>
<div class="a" style="left:858px;top:117px;width:5px;height:5px;background:#000"></div>
<div class="a" style="left:733px;top:123px;width:142px;height:1px;background:#3a3a3a"></div>
<div class="a" style="left:733px;top:124px;width:142px;height:12px;background:#424242"></div>
<div class="a" style="left:733px;top:125px;width:47px;height:11px;background:#535353"></div>
<div class="a" style="left:780px;top:125px;width:27px;height:11px;background:#474747;border-right:1px solid #3a3a3a"></div>
<div class="t" style="left:737px;top:128px;font-size:7px;line-height:7px;color:#eaeaea;letter-spacing:-0.1px">Adjustments</div>
<div class="t" style="left:783px;top:128px;font-size:7px;line-height:7px;color:#9a9a9a;letter-spacing:-0.1px">Styles</div>
<svg class="a" style="left:862px;top:127px" width="12" height="6"><path d="M0,1.5 h3 l-1.5,2z" fill="#ddd"/><path d="M5,0.5h6M5,2.5h6M5,4.5h6" stroke="#aaa" stroke-width="1"/></svg>
<div class="a" style="left:733px;top:136px;width:142px;height:66px;background:#535353"></div>
<div class="t" style="left:738px;top:140px;font-size:7px;line-height:7px;color:#f0f0f0;font-weight:bold;letter-spacing:-0.15px">Add an adjustment</div>
<svg class="a" style="left:0;top:0" width="875" height="466"><defs><linearGradient id="gr"><stop offset="0" stop-color="#222"/><stop offset="1" stop-color="#eee"/></linearGradient></defs><circle cx="767.5" cy="156.5" r="2.6" fill="#777" stroke="#d0d0d0" stroke-width="1.3"/><path d="M767.5,151.0v2M767.5,160.0v2M762,156.5h2M771,156.5h2M763.6,152.6l1.4,1.4M770,159.0l1.4,1.4M763.6,160.4l1.4,-1.4M770,154.0l1.4,-1.4" stroke="#d0d0d0" stroke-width="1"/><rect x="777.5" y="159.0" width="11" height="2.5" fill="#d0d0d0"/><path d="M778,160.5 h10 M778.5,160.5V156.5M780,160.5V155.5M781.5,160.5V153.5M783,160.5V154.5M784.5,160.5V152.5M786,160.5V155.5M787.5,160.5V154.5" stroke="#d0d0d0" stroke-width="1"/><g transform="translate(793.0,151.5)"><rect x="0.5" y="0.5" width="10" height="9" fill="#6c6c6c" stroke="#cfcfcf" stroke-width="0.9"/><path d="M2,8 Q5,6 9,1.5" stroke="#eee" fill="none" stroke-width="1"/><path d="M0.5,3.5h10M0.5,6.5h10M4,0.5v9M7,0.5v9" stroke="#999" stroke-width="0.5"/></g><g transform="translate(808.5,151.5)"><rect x="0.5" y="0.5" width="10" height="9" fill="#6c6c6c" stroke="#cfcfcf" stroke-width="0.9"/><path d="M1,8 L10,1.5" stroke="#eee" stroke-width="1.3"/><rect x="1" y="1" width="4" height="3" fill="#222"/><rect x="6" y="6" width="4" height="3" fill="#ddd"/></g><path d="M824.5,152.0 L834.5,152.0 L829.5,161.5Z" fill="#777" stroke="#d0d0d0" stroke-width="1"/><g transform="translate(754.5,169.5)"><rect x="0.5" y="0.5" width="10" height="9" fill="#6c6c6c" stroke="#cfcfcf" stroke-width="0.9"/><rect x="1" y="1" width="9" height="3" fill="#ccc"/><rect x="1" y="5" width="4" height="4" fill="#222"/><rect x="5" y="5" width="5" height="4" fill="#999"/></g><path d="M775.5,169.5v8M770.5,171.5h10M771.5,171.5l-1.5,4h3zM779.5,171.5l-1.5,4h3z" stroke="#d0d0d0" stroke-width="0.9" fill="none"/><path d="M772,178.5h7" stroke="#d0d0d0" stroke-width="1.2"/><g transform="translate(785.5,169.5)"><rect x="0.5" y="0.5" width="10" height="9" fill="#6c6c6c" stroke="#cfcfcf" stroke-width="0.9"/><rect x="1" y="1" width="4.5" height="8" fill="#222"/><rect x="5.5" y="1" width="4.5" height="8" fill="#ddd"/></g><rect x="801" y="169.5" width="8" height="7" fill="#777" stroke="#d0d0d0" stroke-width="0.9"/><circle cx="808" cy="176.0" r="3.5" fill="#666" stroke="#d0d0d0" stroke-width="1"/><circle cx="804" cy="172.5" r="1.8" fill="#d0d0d0"/><circle cx="822" cy="172.5" r="3" fill="#d0d0d0"/><circle cx="820" cy="176.5" r="3" fill="#d0d0d0"/><circle cx="824" cy="176.5" r="3" fill="#bbb"/><g transform="translate(831.5,169.5)"><rect x="0.5" y="0.5" width="10" height="9" fill="#6c6c6c" stroke="#cfcfcf" stroke-width="0.9"/><path d="M3.5,0.5v9M7,0.5v9M0.5,3.5h10M0.5,6.5h10" stroke="#ddd" stroke-width="0.9"/><rect x="1" y="1" width="9" height="8" fill="#333" opacity="0.4"/></g><g transform="translate(762.0,186.5)"><rect x="0.5" y="0.5" width="10" height="9" fill="#6c6c6c" stroke="#cfcfcf" stroke-width="0.9"/><circle cx="5.5" cy="5" r="3" fill="none" stroke="#ddd" stroke-width="1.2"/></g><g transform="translate(777.5,186.5)"><rect x="0.5" y="0.5" width="10" height="9" fill="#6c6c6c" stroke="#cfcfcf" stroke-width="0.9"/><path d="M0.5,7 L7,0.5 H10.5 L1.5,9.5z" fill="#ccc"/></g><g transform="translate(793.0,186.5)"><rect x="0.5" y="0.5" width="10" height="9" fill="#6c6c6c" stroke="#cfcfcf" stroke-width="0.9"/><path d="M0.5,6 L4,4 L6,5 L10.5,1.5 V4 L6,8 L4,7 L0.5,9z" fill="#eee"/></g><g transform="translate(808.5,186.5)"><rect x="0.5" y="0.5" width="10" height="9" fill="#6c6c6c" stroke="#cfcfcf" stroke-width="0.9"/><path d="M1,1 L10,9M10,1 L1,9" stroke="#ddd" stroke-width="1.2"/></g><g transform="translate(824.0,186.5)"><rect x="0.5" y="0.5" width="10" height="9" fill="#6c6c6c" stroke="#cfcfcf" stroke-width="0.9"/><rect x="1" y="1" width="9" height="8" fill="url(#gr)"/></g></svg>
<div class="a" style="left:733px;top:202px;width:142px;height:2px;background:#3a3a3a"></div>
<div class="a" style="left:733px;top:204px;width:142px;height:11px;background:#424242"></div>
<div class="a" style="left:733px;top:204px;width:27px;height:11px;background:#535353"></div>
<div class="a" style="left:760px;top:204px;width:36px;height:11px;background:#474747;border-right:1px solid #3a3a3a"></div>
<div class="a" style="left:796px;top:204px;width:26px;height:11px;background:#474747;border-right:1px solid #3a3a3a"></div>
<div class="t" style="left:737px;top:207px;font-size:7px;line-height:7px;color:#eaeaea;letter-spacing:-0.1px">Layers</div>
<div class="t" style="left:765px;top:207px;font-size:7px;line-height:7px;color:#9a9a9a;letter-spacing:-0.3px">Channels</div>
<div class="t" style="left:801px;top:207px;font-size:7px;line-height:7px;color:#9a9a9a;letter-spacing:-0.1px">Paths</div>
<svg class="a" style="left:862px;top:207px" width="12" height="6"><path d="M0,1.5 h3 l-1.5,2z" fill="#ddd"/><path d="M5,0.5h6M5,2.5h6M5,4.5h6" stroke="#aaa" stroke-width="1"/></svg>
<div class="a" style="left:733px;top:215px;width:142px;height:53px;background:#535353"></div>
<div class="a" style="left:735px;top:218px;width:44px;height:11px;background:linear-gradient(#6a6a6a,#5c5c5c);border:1px solid #454545;border-radius:2px"></div>
<svg class="a" style="left:738px;top:220px" width="8" height="8"><circle cx="4.5" cy="3" r="2" fill="none" stroke="#ddd" stroke-width="1"/><path d="M3,4.5 L1,6.8" stroke="#ddd" stroke-width="1.2"/></svg>
<div class="t" style="left:748px;top:220px;font-size:7px;line-height:7px;color:#eaeaea;">Kind</div>
<svg class="a" style="left:773px;top:219px" width="5" height="9"><path d="M0.5,3.5 L2.5,1 L4.5,3.5z M0.5,5.5 L2.5,8 L4.5,5.5z" fill="#ddd"/></svg>
<svg class="a" style="left:0;top:0" width="875" height="466"><rect x="788" y="219.5" width="8.5" height="8" fill="#777" stroke="#ccc" stroke-width="0.9"/><path d="M790,226 l2,-3 l1.5,2 l1,-1 l1,2z" fill="#eee"/><circle cx="806" cy="223.5" r="3.8" fill="#ccc"/><path d="M803.5,226 L808.5,221" stroke="#555" stroke-width="1.3"/><text x="821.5" y="228" text-anchor="middle" font-family="Liberation Serif" font-size="10" fill="#ccc">T</text><rect x="833.5" y="219.5" width="7" height="8" fill="none" stroke="#ccc" stroke-width="1"/><rect x="832.5" y="218.5" width="2" height="2" fill="#ccc"/><rect x="839.5" y="218.5" width="2" height="2" fill="#ccc"/><rect x="832.5" y="226.5" width="2" height="2" fill="#ccc"/><rect x="839.5" y="226.5" width="2" height="2" fill="#ccc"/><path d="M849,222 h5 l3,3 v4 h-8z" fill="#ccc"/><rect x="850.5" y="224.5" width="4" height="3" fill="#666"/><rect x="865" y="218" width="6" height="11" fill="#3a3a3a" stroke="#777" stroke-width="0.6"/><rect x="865.5" y="218.5" width="5" height="4" fill="#ccc"/></svg>
<div class="a" style="left:733px;top:232px;width:142px;height:1px;background:#474747"></div>
<div class="a" style="left:735px;top:236px;width:71px;height:11px;background:linear-gradient(#6a6a6a,#5c5c5c);border:1px solid #454545;border-radius:2px"></div>
<div class="t" style="left:740px;top:238px;font-size:7px;line-height:7px;color:#eaeaea;">Normal</div>
<svg class="a" style="left:800px;top:237px" width="5" height="9"><path d="M0.5,3.5 L2.5,1 L4.5,3.5z M0.5,5.5 L2.5,8 L4.5,5.5z" fill="#ddd"/></svg>
<div class="t" style="left:810px;top:238px;font-size:7px;line-height:7px;color:#eaeaea;letter-spacing:-0.2px">Opacity:</div>
<div class="a" style="left:838px;top:236px;width:22px;height:11px;background:#3b3b3b"></div>
<div class="t" style="left:840px;top:238px;font-size:7px;line-height:7px;color:#eaeaea;letter-spacing:-0.2px">100%</div>
<div class="a" style="left:860px;top:236px;width:12px;height:11px;background:#676767;border-left:1px solid #444"></div>
<svg class="a" style="left:863.5px;top:240px" width="5" height="4"><path d="M0.5,0.5h4l-2,2.5z" fill="#ddd"/></svg>
<div class="a" style="left:733px;top:250px;width:142px;height:1px;background:#474747"></div>
<div class="t" style="left:736px;top:256px;font-size:7px;line-height:7px;color:#eaeaea;letter-spacing:-0.1px">Lock:</div>
<svg class="a" style="left:0;top:0" width="875" height="466"><rect x="756.5" y="255" width="7" height="7" fill="none" stroke="#888" stroke-width="0.8" stroke-dasharray="1 1"/><rect x="758.5" y="257" width="3" height="3" fill="#888"/><path d="M770,263 L779,254" stroke="#999" stroke-width="1.3"/><path d="M768.5,264 q0,-3 2.5,-2.5 q-0.5,2.5 -2.5,2.5z" fill="#999"/><path d="M789.5,254v10M784.5,259h10M789.5,254l-1.5,1.5M789.5,254l1.5,1.5M789.5,264l-1.5,-1.5M789.5,264l1.5,-1.5M784.5,259l1.5,-1.5M784.5,259l1.5,1.5M794.5,259l-1.5,-1.5M794.5,259l-1.5,1.5" stroke="#ccc" stroke-width="1"/><rect x="800.5" y="258.5" width="6" height="5.5" fill="#ccc"/><path d="M801.5,258.5 v-1.5 a2,2 0 0 1 4,0 v1.5" stroke="#ccc" fill="none" stroke-width="1.1"/></svg>
<div class="t" style="left:824px;top:255px;font-size:7px;line-height:7px;color:#eaeaea;letter-spacing:-0.1px">Fill:</div>
<div class="a" style="left:838px;top:254px;width:22px;height:11px;background:#3b3b3b"></div>
<div class="t" style="left:840px;top:256px;font-size:7px;line-height:7px;color:#eaeaea;letter-spacing:-0.2px">100%</div>
<div class="a" style="left:860px;top:254px;width:12px;height:11px;background:#676767;border-left:1px solid #444"></div>
<svg class="a" style="left:863.5px;top:258px" width="5" height="4"><path d="M0.5,0.5h4l-2,2.5z" fill="#ddd"/></svg>
<div class="a" style="left:733px;top:268px;width:133px;height:185px;background:#474747;border-top:1px solid #3a3a3a"></div>
<div class="a" style="left:866px;top:268px;width:9px;height:185px;background:#4e4e4e;border-left:1px solid #3a3a3a"></div>
<div class="a" style="left:733px;top:269px;width:19px;height:22px;background:#4d4d4d;border-bottom:1px solid #3c3c3c"></div>
<div class="a" style="left:752px;top:269px;width:114px;height:22px;background:#5a687c;border-bottom:1px solid #3c3c3c"></div>
<div class="a" style="left:752px;top:269px;width:1px;height:22px;background:#3c3c3c"></div>
<svg class="a" style="left:737px;top:276px" width="10" height="8"><path d="M1,4 Q5,0 9,4 Q5,8 1,4z" fill="none" stroke="#d0d0d0" stroke-width="0.9"/><circle cx="5" cy="4" r="1.6" fill="#d0d0d0"/></svg>
<div class="a" style="left:754px;top:270px;width:23px;height:20px;background:#fff;border:1px solid #cfd8e0"></div>
<svg class="a" style="left:755px;top:271px" width="21" height="18"><rect x="0" y="11.5" width="21" height="6.5" fill="#000"/><path d="M6,11.5 Q6,6.5 10.5,6 Q15,6.5 15.5,9.5 L15,11.5z" fill="#000"/><rect x="13.5" y="10.5" width="7" height="7" fill="#5a687c" stroke="#f0f0f0" stroke-width="1"/><path d="M15.5,12.5h3v3h-3" stroke="#f0f0f0" fill="none" stroke-width="0.9"/></svg>
<div class="t" style="left:781px;top:278px;font-size:7px;line-height:7px;color:#eef2f6;letter-spacing:-0.1px">Threshold 1 copy</div>
<div class="a" style="left:733px;top:292px;width:133px;height:25px;background:#4d4d4d;border-bottom:1px solid #3c3c3c"></div>
<div class="a" style="left:752px;top:292px;width:1px;height:25px;background:#3c3c3c"></div>
<svg class="a" style="left:737px;top:300px" width="10" height="8"><path d="M1,4 Q5,0 9,4 Q5,8 1,4z" fill="none" stroke="#d0d0d0" stroke-width="0.9"/><circle cx="5" cy="4" r="1.6" fill="#d0d0d0"/></svg>
<svg class="a" style="left:758px;top:299px" width="14" height="11"><rect x="0.5" y="0.5" width="11" height="9" fill="#777" stroke="#ccc" stroke-width="0.9"/><path d="M1,7 L3.5,5 L5,6 L11,2 V4.5 L5,8 L3.5,7 L1,9z" fill="#eee"/></svg>
<svg class="a" style="left:776px;top:298px" width="6" height="12"><rect x="1" y="0.8" width="4" height="4.5" rx="2" fill="none" stroke="#bbb" stroke-width="0.9"/><rect x="1" y="6.5" width="4" height="4.5" rx="2" fill="none" stroke="#bbb" stroke-width="0.9"/></svg>
<div class="a" style="left:784px;top:295px;width:21px;height:18px;background:#fff;border:1px solid #2a2a2a"></div>
<div class="t" style="left:812px;top:302px;font-size:7px;line-height:7px;color:#e8e8e8;letter-spacing:-0.1px">Threshold 1</div>
<div class="a" style="left:733px;top:317px;width:133px;height:23px;background:#4d4d4d;border-bottom:1px solid #3c3c3c"></div>
<div class="a" style="left:752px;top:317px;width:1px;height:23px;background:#3c3c3c"></div>
<svg class="a" style="left:737px;top:324px" width="10" height="8"><path d="M1,4 Q5,0 9,4 Q5,8 1,4z" fill="none" stroke="#d0d0d0" stroke-width="0.9"/><circle cx="5" cy="4" r="1.6" fill="#d0d0d0"/></svg>
<div class="a" style="left:754px;top:319px;width:21px;height:18px;border:1px solid #2a2a2a;background:linear-gradient(#cfcac4 0%,#e6d6c0 50%,#d8c090 62%,#7a8a30 68%,#4a5a18 100%)"></div>
<svg class="a" style="left:755px;top:320px" width="19" height="16"><ellipse cx="10" cy="6.5" rx="4.2" ry="2.6" fill="#1a2a14"/><rect x="9.5" y="8" width="1" height="2.5" fill="#222"/></svg>
<div class="t" style="left:781px;top:326px;font-size:7px;line-height:7px;color:#e8e8e8;letter-spacing:-0.1px">Layer 0</div>
<div class="a" style="left:733px;top:453px;width:142px;height:13px;background:#535353;border-top:1px solid #3c3c3c"></div>
<svg class="a" style="left:0;top:0" width="875" height="466"><path d="M747,459.5 a2,2 0 0 1 0,-0 M745,459.5 a2.2,2.2 0 0 1 2.2,-2.2 h1.5 M752,459.5 a2.2,2.2 0 0 1 -2.2,2.2 h-1.5 M745,459.5 a2.2,2.2 0 0 0 2.2,2.2 M752,459.5 a2.2,2.2 0 0 0 -2.2,-2.2 M747,459.5h3" stroke="#888" fill="none" stroke-width="0.9"/><text x="762" y="463" font-family="Liberation Serif" font-style="italic" font-size="9" fill="#ccc">fx</text><rect x="770" y="462" width="1.2" height="1.2" fill="#ccc"/><rect x="779.5" y="456" width="9" height="7" fill="#ccc"/><circle cx="784" cy="459.5" r="2" fill="#555"/><circle cx="800" cy="459.5" r="3.5" fill="#ccc"/><path d="M798,462 L802.5,457" stroke="#555" stroke-width="1.1"/><rect x="804" y="462" width="1.2" height="1.2" fill="#ccc"/><path d="M814,456 h3 l1,1 h5 v6 h-9z" fill="#ccc"/><path d="M833,456 h7 v7 h-5 l-2,-2z" fill="#ccc"/><path d="M833,458 h3 v3" stroke="#555" fill="none" stroke-width="0.8"/><rect x="849" y="458" width="8" height="5.5" fill="#ccc"/><rect x="848" y="456.5" width="10" height="1.2" fill="#ccc"/><rect x="851" y="455" width="4" height="1.2" fill="#ccc"/><path d="M851.5,459v3.5M854.5,459v3.5" stroke="#666" stroke-width="0.7"/></svg>
<!-- tooltip -->
<div class="a" style="left:68px;top:41px;width:67px;height:12px;background:#ffffe1;border:1px solid #555"></div>
<div class="t" style="left:71px;top:43px;font-size:8.5px;line-height:8px;color:#111;letter-spacing:-0.25px;-webkit-text-stroke:0.1px #111">Add to selection</div>
</body></html>
